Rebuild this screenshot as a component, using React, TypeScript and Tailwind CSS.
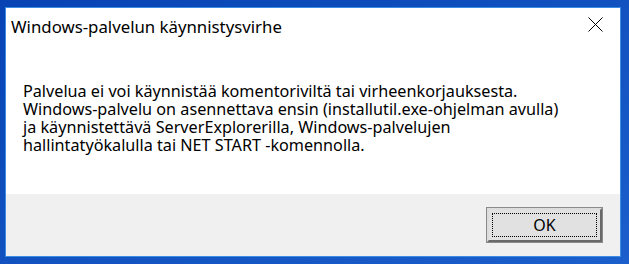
import React from "react";

const bodyLines = [
  "Palvelua ei voi käynnistää komentoriviltä tai virheenkorjauksesta.",
  "Windows-palvelu on asennettava ensin (installutil.exe-ohjelman avulla)",
  "ja käynnistettävä ServerExplorerilla, Windows-palvelujen",
  "hallintatyökalulla tai NET START -komennolla.",
];

const App = () => {
  return (
    <div className="w-[629px] h-[264px] bg-gradient-to-br from-[#0843b4] to-[#1b5fcc] pt-[7px] pl-[5px] overflow-hidden">
      <div className="w-[616px] h-[250px] border border-[#3b8de4] bg-white flex flex-col">
        {/* Title bar */}
        <div className="h-[47px] flex items-start justify-between pl-[5px] pr-[17px] pt-[9px]">
          <span className="text-[16.8px] leading-[20px] text-black font-['Noto_Sans',sans-serif]">
            Windows-palvelun käynnistysvirhe
          </span>
          <svg width="15" height="15" viewBox="0 0 15 15">
            <path d="M0.5 0.5 L14.5 14.5 M14.5 0.5 L0.5 14.5" stroke="#000" strokeWidth="1" />
          </svg>
        </div>

        {/* Message */}
        <div className="flex-1 pl-[17px] pt-[27px] font-['Noto_Sans',sans-serif] text-[16.2px] leading-[18px] text-black">
          {bodyLines.map((line) => (
            <div key={line} className="whitespace-nowrap">{line}</div>
          ))}
        </div>

        {/* Footer */}
        <div className="h-[62px] bg-[#f0f0f0] flex justify-end items-start pt-[14px] pr-[18px]">
          <button className="w-[115px] h-[34px] bg-[#e1e1e1] border-2 border-t-[#dcdcdc] border-l-[#dcdcdc] border-r-[#696969] border-b-[#696969] outline outline-1 outline-[#8a8a8a] p-[3px] flex">
            <span className="flex-1 border border-dotted border-black flex items-center justify-center font-['Noto_Sans',sans-serif] text-[16px] text-black">
              OK
            </span>
          </button>
        </div>
      </div>
    </div>
  );
};

export default App;
